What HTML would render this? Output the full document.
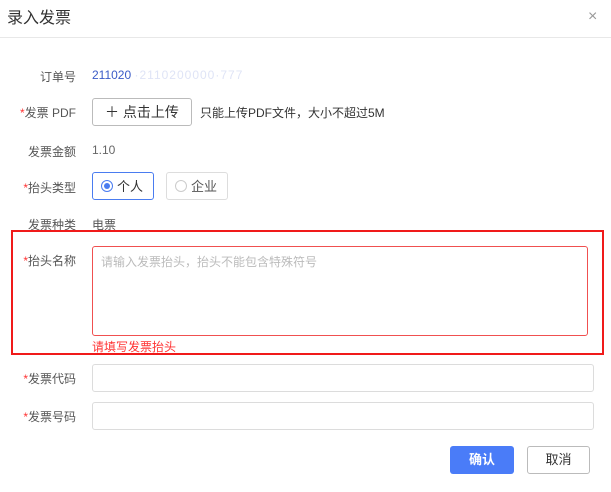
<!DOCTYPE html><html><head><meta charset="utf-8"><style>
*{margin:0;padding:0;box-sizing:border-box}
body{width:611px;height:492px;background:#fff;font-family:"Liberation Sans","Noto Sans CJK SC",sans-serif;font-size:12px;color:#333;position:relative;overflow:hidden}
.a{position:absolute}
.lb{position:absolute;right:535px;width:90px;text-align:right;color:#555;font-size:12px;white-space:nowrap}
.s{color:#f33}
.inp{position:absolute;left:92px;width:502px;height:28px;border:1px solid #dcdcdc;border-radius:3px}
</style></head><body>
<div class="a" style="left:7px;top:4px;font-size:16px;color:#333">录入发票</div>
<div class="a" style="left:588px;top:8px;font-size:16px;color:#999">×</div>
<div class="a" style="left:0;top:37px;width:611px;height:1px;background:#e8e8e8"></div>

<div class="lb" style="top:68px">订单号</div>
<div class="a" style="left:92px;top:68px;color:#3a5bc7">211020 <span style="color:#dfe4f6;letter-spacing:1px">·2110200000·777</span></div>

<div class="lb" style="top:104px"><span class="s">*</span>发票 PDF</div>
<div class="a" style="left:92px;top:98px;width:100px;height:28px;border:1px solid #bbb;border-radius:3px;font-size:14px;text-align:center;line-height:26px;color:#333">＋ 点击上传</div>
<div class="a" style="left:200px;top:104px;color:#333">只能上传PDF文件，大小不超过5M</div>

<div class="lb" style="top:143px">发票金额</div>
<div class="a" style="left:92px;top:143px;color:#666">1.10</div>

<div class="lb" style="top:179px"><span class="s">*</span>抬头类型</div>
<div class="a" style="left:92px;top:172px;width:62px;height:28px;border:1px solid #4a7cf0;border-radius:3px"></div>
<div class="a" style="left:101px;top:180px;width:12px;height:12px;border:1px solid #4a7cf0;border-radius:50%"><div style="margin:2px;width:6px;height:6px;background:#4a7cf0;border-radius:50%"></div></div>
<div class="a" style="left:117px;top:176px;color:#333;font-size:13px">个人</div>
<div class="a" style="left:166px;top:172px;width:62px;height:28px;border:1px solid #ddd;border-radius:3px"></div>
<div class="a" style="left:175px;top:180px;width:12px;height:12px;border:1px solid #ccc;border-radius:50%"></div>
<div class="a" style="left:191px;top:176px;color:#555;font-size:13px">企业</div>

<div class="lb" style="top:216px">发票种类</div>
<div class="a" style="left:92px;top:216px;color:#555">电票</div>

<div class="a" style="left:11px;top:230px;width:593px;height:125px;border:2px solid #f01a1a"></div>
<div class="lb" style="top:252px"><span class="s">*</span>抬头名称</div>
<div class="a" style="left:92px;top:246px;width:496px;height:90px;border:1px solid #f05050;border-radius:3px"></div>
<div class="a" style="left:101px;top:253px;color:#bbb">请输入发票抬头，抬头不能包含特殊符号</div>
<div class="a" style="left:92px;top:338px;color:#f33">请填写发票抬头</div>

<div class="lb" style="top:370px"><span class="s">*</span>发票代码</div>
<div class="inp" style="top:364px"></div>
<div class="lb" style="top:408px"><span class="s">*</span>发票号码</div>
<div class="inp" style="top:402px"></div>

<div class="a" style="left:450px;top:446px;width:64px;height:28px;background:#4a7cf8;border-radius:3px;color:#fff;font-size:13px;text-align:center;line-height:28px;font-weight:bold">确认</div>
<div class="a" style="left:527px;top:446px;width:63px;height:28px;border:1px solid #bbb;border-radius:3px;color:#333;font-size:13px;text-align:center;line-height:26px">取消</div>
</body></html>
